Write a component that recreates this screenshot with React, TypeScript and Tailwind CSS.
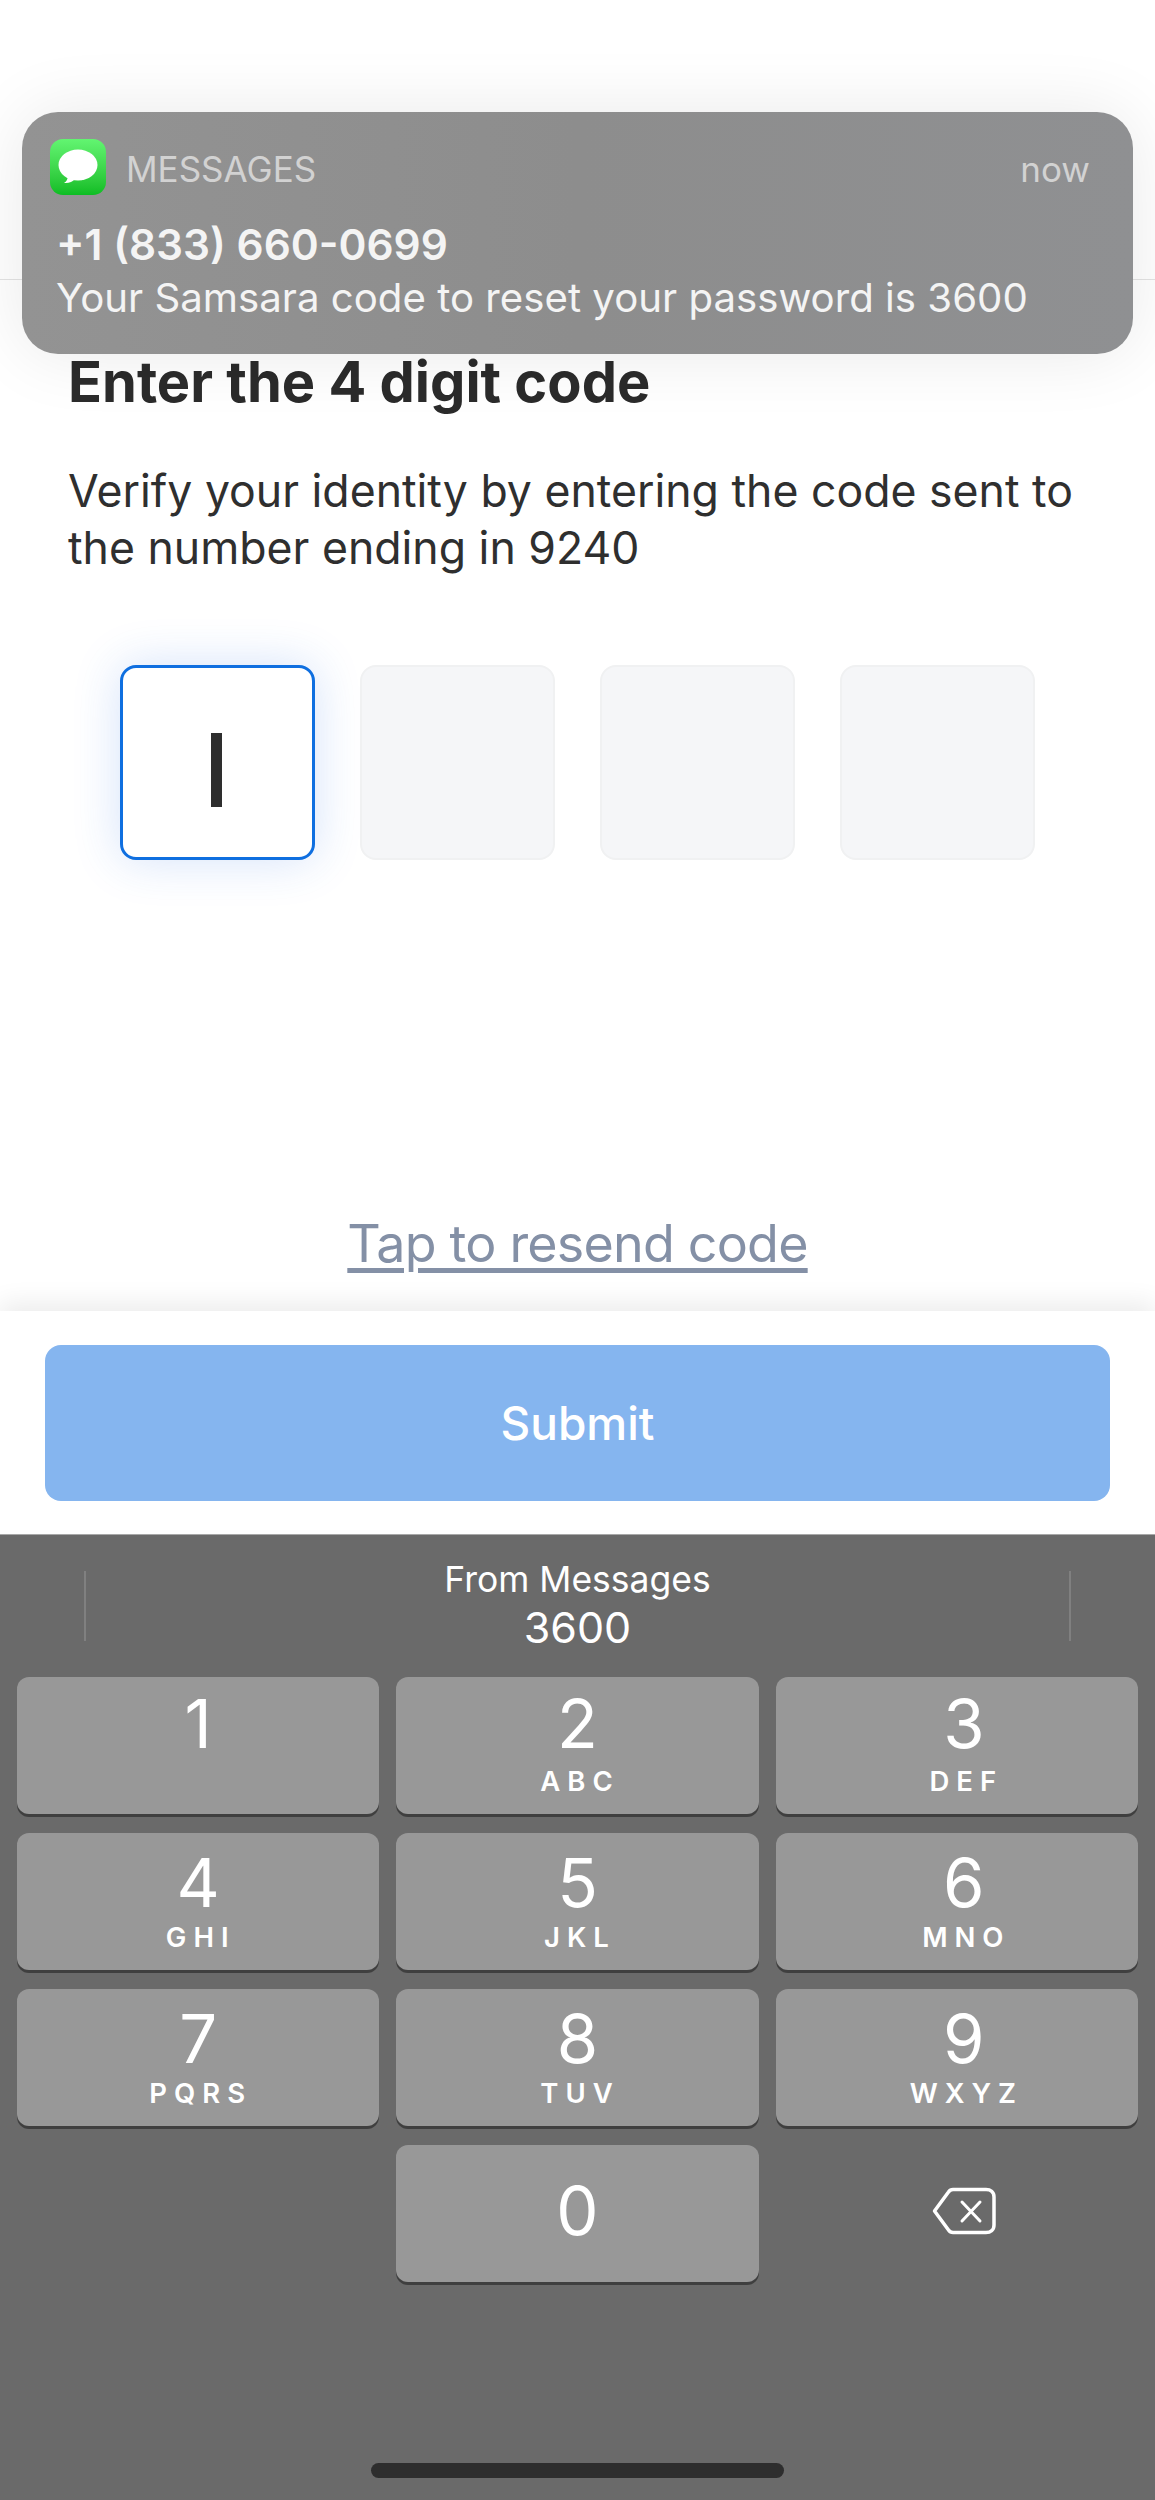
const KEYS = [
  { digit: "1", letters: "", pad: "pt-[13px]", gap: "mt-[9px]" },
  { digit: "2", letters: "ABC", pad: "pt-[13px]", gap: "mt-[9px]" },
  { digit: "3", letters: "DEF", pad: "pt-[13px] pl-[14px]", gap: "mt-[9px]" },
  { digit: "4", letters: "GHI", pad: "pt-[16px]", gap: "mt-[6px]" },
  { digit: "5", letters: "JKL", pad: "pt-[16px]", gap: "mt-[6px]" },
  { digit: "6", letters: "MNO", pad: "pt-[16px] pl-[14px]", gap: "mt-[6px]" },
  { digit: "7", letters: "PQRS", pad: "pt-[16px]", gap: "mt-[6px]" },
  { digit: "8", letters: "TUV", pad: "pt-[16px]", gap: "mt-[6px]" },
  { digit: "9", letters: "WXYZ", pad: "pt-[16px] pl-[14px]", gap: "mt-[6px]" },
];

function MessagesIcon() {
  return (
    <div className="flex h-[56px] w-[56px] shrink-0 items-center justify-center rounded-[13px] bg-gradient-to-b from-[#62f571] to-[#0bbd23]">
      <svg width="42" height="38" viewBox="0 0 42 38" fill="white">
        <ellipse cx="21" cy="17" rx="19.5" ry="15.5" />
        <path d="M11 27 C11 31 9.5 33.5 7 35 C11.5 35.5 15.5 34 18 31 Z" />
      </svg>
    </div>
  );
}

function Notification() {
  return (
    <div className="absolute left-[22px] top-[112px] h-[242px] w-[1111px] rounded-[36px] bg-gradient-to-r from-[#939393] via-[#8d8d8d] to-[#8f9092] pl-[28px] pr-[43px] pt-[27px] shadow-[0_0_70px_rgba(0,0,0,0.09)]">
      <div className="flex items-center">
        <MessagesIcon />
        <span className="ml-[20px] mt-[3px] text-[35px] leading-[40px] text-[#d2d2d2]">MESSAGES</span>
        <span className="ml-auto mt-[3px] text-[35px] leading-[40px] text-[#d2d2d2]">now</span>
      </div>
      <div className="ml-[6px] mt-[25px] text-[42.4px] font-semibold leading-[50px] text-[#f4f4f4]">
        +1 (833) 660-0699
      </div>
      <div className="ml-[6px] mt-[3px] whitespace-nowrap text-[40.2px] leading-[50px] text-[#f4f4f4]">
        Your Samsara code to reset your password is 3600
      </div>
    </div>
  );
}

function CodeBoxes() {
  return (
    <div className="mt-[88px] flex gap-[45px] pl-[52px]">
      <div className="flex h-[195px] w-[195px] items-center justify-center rounded-[16px] border-[3px] border-[#0f6fe0] bg-white shadow-[0_0_48px_rgba(40,110,230,0.2)]">
        <div className="mr-[3px] mt-[15px] h-[74px] w-[11px] bg-[#2e2e2e]" />
      </div>
      {[1, 2, 3].map((i) => (
        <div key={i} className="h-[195px] w-[195px] rounded-[16px] border-2 border-[#f0f1f2] bg-[#f5f6f8]" />
      ))}
    </div>
  );
}

function Key({ digit, letters, pad, gap }: { digit: string; letters: string; pad: string; gap: string }) {
  return (
    <div className={`flex h-[137px] flex-col items-center rounded-[12px] bg-[#989898] shadow-[0_3px_0_#3f3f3f] text-white ${pad}`}>
      <span className="text-[67px] leading-[67px]">{digit}</span>
      <span className={`ml-[5px] text-[27.5px] font-semibold leading-[30px] tracking-[7px] ${gap}`}>{letters}</span>
    </div>
  );
}

function Keyboard() {
  return (
    <div className="flex flex-1 flex-col border-t border-[#a8a8a8] bg-[#6a6a6a] text-white">
      <div className="flex h-[142px] items-start justify-between px-[84px] pt-[36px]">
        <div className="h-[70px] w-[2px] bg-[#808080]" />
        <div className="-mt-[15px] text-center">
          <div className="text-[35.5px] leading-[47px]">From Messages</div>
          <div className="text-[43px] leading-[48px]">3600</div>
        </div>
        <div className="h-[70px] w-[2px] bg-[#808080]" />
      </div>
      <div className="grid grid-cols-3 gap-x-[17px] gap-y-[19px] px-[17px]">
        {KEYS.map((k) => (
          <Key key={k.digit} digit={k.digit} letters={k.letters} pad={k.pad} gap={k.gap} />
        ))}
        <div />
        <div className="flex h-[137px] items-center justify-center rounded-[12px] bg-[#989898] pb-[6px] shadow-[0_3px_0_#3f3f3f]">
          <span className="text-[67px] leading-[67px]">0</span>
        </div>
        <div className="flex h-[137px] items-center justify-center pb-[6px] pl-[14px]">
          <svg width="64" height="48" viewBox="0 0 64 48" fill="none" stroke="white" strokeLinejoin="round" strokeLinecap="round">
            <path strokeWidth="3.5" d="M21 2.5 H54 C58.5 2.5 62 5 62 10 V38 C62 43 58.5 45.5 54 45.5 H21 C19 45.5 17.5 44.5 16.5 43 L2.5 24 L16.5 5 C17.5 3.5 19 2.5 21 2.5 Z" />
            <path strokeWidth="3" d="M30 15 L48 34 M48 15 L30 34" />
          </svg>
        </div>
      </div>
      <div className="mb-[22px] mt-auto h-[15px] w-[413px] self-center rounded-full bg-[#2e2e2e]" />
    </div>
  );
}

export default function App() {
  return (
    <div
      className="relative flex h-[2500px] w-full flex-col overflow-hidden bg-white"
      style={{ fontFamily: "Inter, 'Noto Sans', sans-serif" }}
    >
      <div className="h-[280px] shrink-0 border-b border-[#e4e4e4]" />
      <div className="flex h-[1031px] shrink-0 flex-col pl-[68px] pr-[60px]">
        <h1 className="mt-[72px] text-[56px] font-bold leading-[60px] text-[#2b2b2b]">
          Enter the 4 digit code
        </h1>
        <p className="mt-[51px] text-[44.6px] leading-[57px] text-[#2f2f2f]">
          Verify your identity by entering the code sent to the number ending in 9240
        </p>
        <CodeBoxes />
        <a className="mt-[354px] -ml-[8px] text-center text-[52px] leading-[60px] tracking-[-0.8px] text-[#8490a6] underline decoration-[5px] underline-offset-[6px]">
          Tap to resend code
        </a>
      </div>
      <div className="h-[223px] shrink-0 bg-white px-[45px] pt-[34px] shadow-[0_-8px_24px_rgba(0,0,0,0.08)]">
        <div className="flex h-[156px] items-center justify-center rounded-[16px] bg-[#85b5ef] text-[46px] font-medium text-white">
          Submit
        </div>
      </div>
      <Keyboard />
      <Notification />
    </div>
  );
}
